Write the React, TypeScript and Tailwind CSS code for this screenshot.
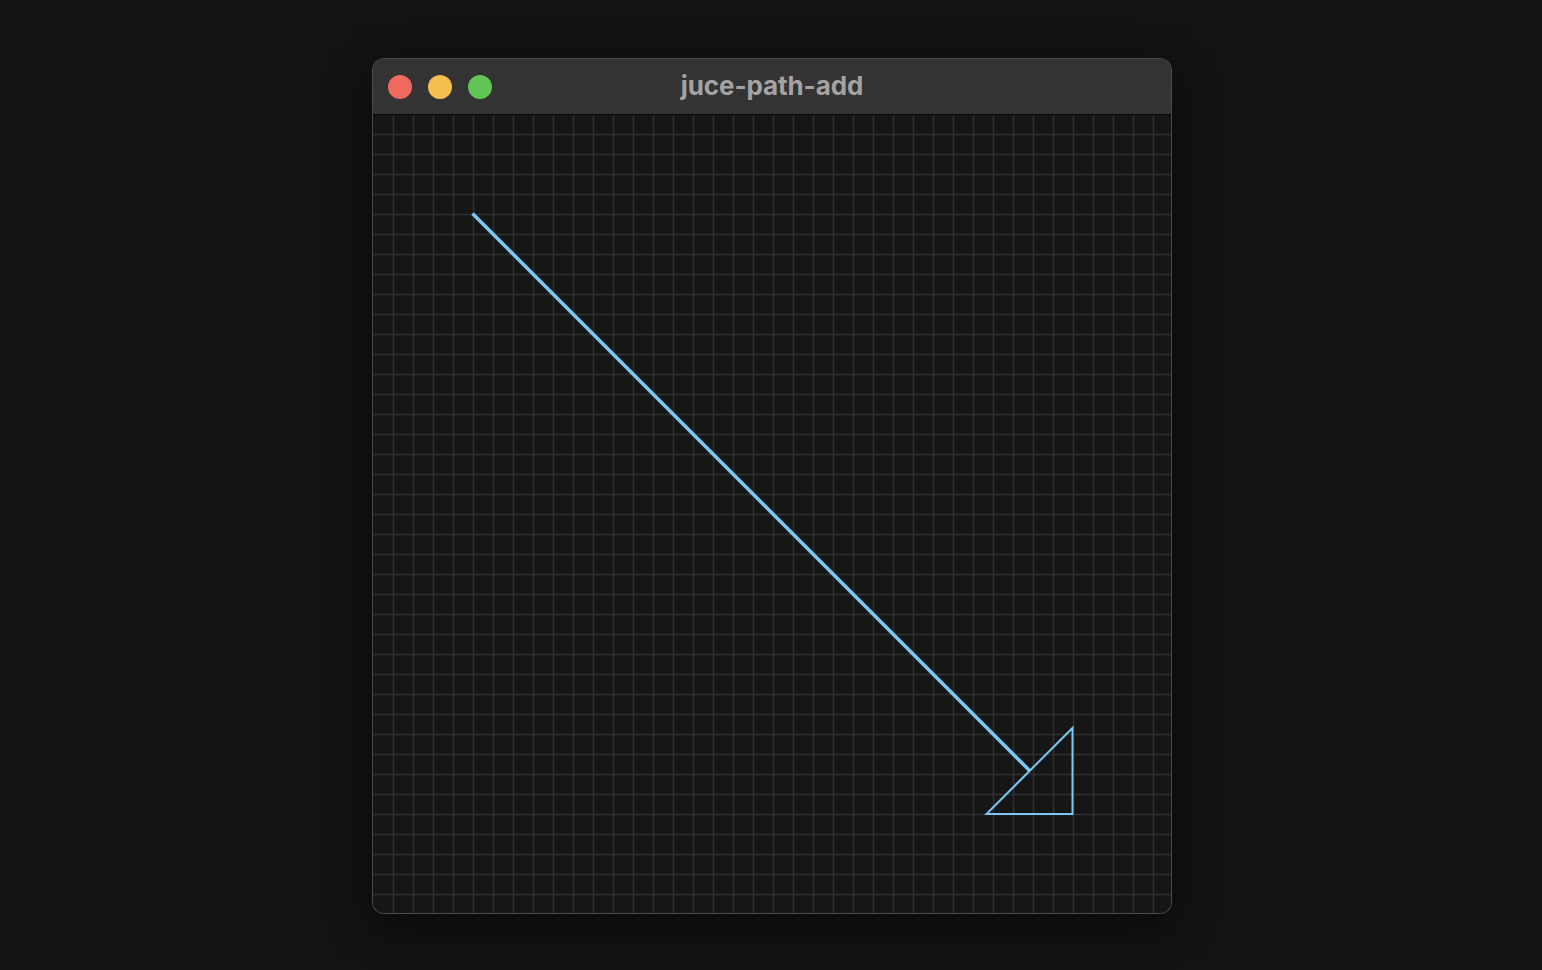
import React from 'react';

const W = 798;
const H = 799;

const GridCanvas: React.FC = () => {
  const cols = Array.from({ length: Math.floor(W / 20) }, (_, i) => (i + 1) * 20);
  const rows = Array.from({ length: Math.floor(H / 20) }, (_, i) => (i + 1) * 20);

  return (
    <svg width={W} height={H} viewBox={`0 0 ${W} ${H}`} className="block">
      <rect x={0} y={0} width={W} height={H} fill="#161616" />
      {cols.map((x) => (
        <rect key={`c${x}`} x={x - 0.25} y={0} width={1.5} height={H} fill="#303030" />
      ))}
      {rows.map((y) => (
        <rect key={`r${y}`} x={0} y={y - 0.25} width={W} height={1.5} fill="#303030" />
      ))}
      <rect x={0} y={0} width={W} height={1} fill="#0a0a0a" />
      <line x1={99.5} y1={99.5} x2={656.5} y2={656.5} stroke="#7cc8f4" strokeWidth={3.5} />
      <path d="M699.5 614 L699.5 700 L613.5 700 Z" fill="none" stroke="#7cc8f4" strokeWidth={2} />
    </svg>
  );
};

const App: React.FC = () => {
  return (
    <div className="min-h-[970px] w-full bg-[#131313] pl-[373px] pt-[59px]">
      <div className="w-[798px] overflow-hidden rounded-[11px] shadow-[0_0_0_1px_#4b4b4b,0_12px_40px_rgba(0,0,0,0.6)]">
        <div className="grid h-[55px] grid-cols-[1fr_auto_1fr] items-center bg-[#333333] px-[15px]">
          <div className="flex items-center gap-[16px]">
            <span className="h-[24px] w-[24px] rounded-full bg-[#ee6a5f]" />
            <span className="h-[24px] w-[24px] rounded-full bg-[#f5bf4f]" />
            <span className="h-[24px] w-[24px] rounded-full bg-[#61c454]" />
          </div>
          <div className="-mt-[3px] font-['Inter',sans-serif] text-[26px] font-bold tracking-[-0.1px] text-[#a3a3a3]">
            juce-path-add
          </div>
          <div />
        </div>
        <GridCanvas />
      </div>
    </div>
  );
};

export default App;
